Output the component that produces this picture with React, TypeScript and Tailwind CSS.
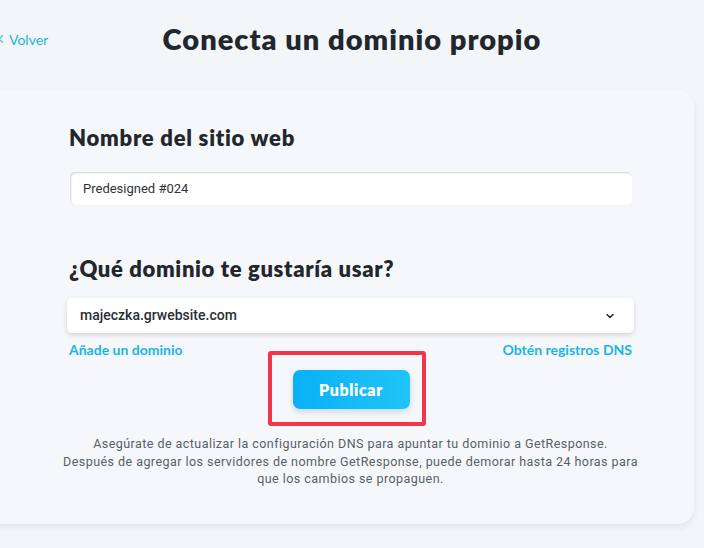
import React from 'react';
import { ChevronLeft, ChevronDown } from 'lucide-react';

const heading = "font-['Lato','Open_Sans',sans-serif]";
const body = "font-['Roboto','Liberation_Sans',sans-serif]";

const App: React.FC = () => {
  return (
    <div className="w-[704px] h-[548px] overflow-hidden bg-[#f3f5f8]">
      <div className="grid grid-cols-[1fr_auto_1fr] items-center h-[78px]">
        <a className={`${heading} flex items-center text-[14px] text-[#19b6e6] -ml-[6px] self-center`}>
          <ChevronLeft size={14} strokeWidth={1.8} />
          <span className="ml-[1px]">Volver</span>
        </a>
        <h1 className={`${heading} text-[29px] font-extrabold text-[#22262d] tracking-[1px]`}>
          Conecta un dominio propio
        </h1>
        <div />
      </div>

      <div className="-ml-[12px] mt-[12px] w-[706px] h-[434px] bg-[#f6f7fa] rounded-[16px] shadow-[0_3px_6px_rgba(30,40,60,0.08)] pt-[31px] pl-[79px]">
        <div className="w-[567px]">
          <h2 className={`${heading} text-[22px] font-extrabold text-[#22262d] pl-[2px] tracking-[0.75px]`}>Nombre del sitio web</h2>
          <div className={`${body} mt-[18px] ml-[3px] w-[562px] h-[33px] bg-white rounded-[5px] shadow-[inset_1px_1px_2px_rgba(0,0,0,0.18)] flex items-center pl-[13px] text-[13px] text-[#2e3238]`}>
            Predesigned #024
          </div>

          <h2 className={`${heading} text-[22px] font-extrabold text-[#22262d] mt-[47px] pl-[2px] tracking-[0.65px]`}>¿Qué dominio te gustaría usar?</h2>
          <div className={`${body} mt-[13px] w-[567px] h-[35px] bg-white rounded-[5px] shadow-[0_2px_5px_rgba(20,30,50,0.15)] flex items-center justify-between pl-[13px] pr-[18px] text-[14px] font-medium text-[#2a2e34]`}>
            <span>majeczka.grwebsite.com</span>
            <ChevronDown size={12} strokeWidth={3} className="text-[#22262d]" />
          </div>

          <div className={`${heading} flex justify-between mt-[6px] px-[2px] text-[14px] font-bold text-[#19b6e6]`}>
            <span>Añade un dominio</span>
            <span>Obtén registros DNS</span>
          </div>

          <div className="flex justify-center -mt-[9px]">
            <div className="border-[4px] border-[#f3354c] rounded-[3px] w-[158px] h-[75px] flex items-center justify-center -ml-[7px]">
              <button className={`${heading} ml-[8px] w-[117px] h-[39px] mt-[2px] rounded-[7px] bg-gradient-to-r from-[#0ab0f6] to-[#1fc4f9] text-white text-[16px] font-extrabold tracking-[0.6px] shadow-[0_3px_6px_rgba(0,80,140,0.18)]`}>
                Publicar
              </button>
            </div>
          </div>
        </div>

        <p className={`${body} -ml-[79px] w-[725px] text-center text-[12.5px] leading-[17.5px] text-[#585e68] tracking-[0.45px] mt-[9px]`}>
          Asegúrate de actualizar la configuración DNS para apuntar tu dominio a GetResponse.
          <br />
          Después de agregar los servidores de nombre GetResponse, puede demorar hasta 24 horas para
          <br />
          que los cambios se propaguen.
        </p>
      </div>
    </div>
  );
};

export default App;
